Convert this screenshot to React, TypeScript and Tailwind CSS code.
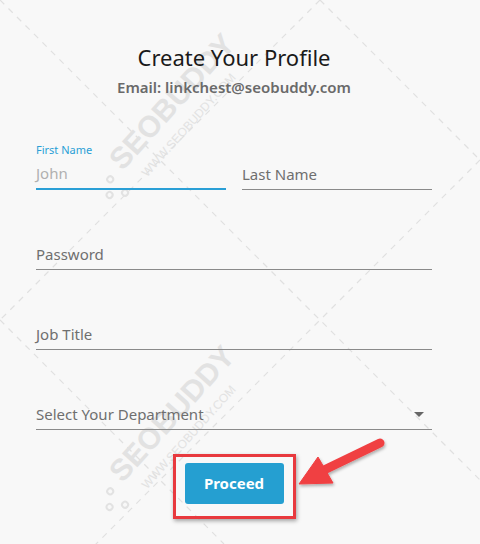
import React from "react";

// --- Constants ---

const FONT = { fontFamily: '"Noto Sans", "Open Sans", sans-serif' };

const WATERMARKS = [
    { x: 160, y: 130 },
    { x: 160, y: 442 },
];

// --- Pieces ---

function Watermark()
{
    return (
        <svg className="pointer-events-none absolute inset-0" width="480" height="544" viewBox="0 0 480 544">
            <g stroke="#e0e0e0" strokeWidth="1.2" strokeDasharray="6 6" fill="none">
                <line x1="0" y1="0" x2="480" y2="480" />
                <line x1="320" y1="0" x2="0" y2="320" />
                <line x1="320" y1="0" x2="480" y2="160" />
                <line x1="480" y1="160" x2="0" y2="640" />
                <line x1="0" y1="320" x2="224" y2="544" />
            </g>
            {WATERMARKS.map((tMark, index) => (
                <g key={index} transform={`translate(${tMark.x} ${tMark.y}) rotate(-48)`} fill="#e2e2e2">
                    <text x="-56" y="0" fontSize="30" fontWeight="700" fontFamily="Liberation Sans, sans-serif">SEOBUDDY</text>
                    <text x="-44" y="22" fontSize="12" fontFamily="Liberation Sans, sans-serif">WWW.SEOBUDDY.COM</text>
                    <g stroke="#e2e2e2" strokeWidth="2" fill="none">
                        <circle cx="-70" cy="-4" r="3" />
                        <circle cx="-70" cy="16" r="3" />
                        <circle cx="-82" cy="6" r="3" />
                    </g>
                </g>
            ))}
        </svg>
    );
}

function Arrow()
{
    return (
        <svg className="pointer-events-none absolute inset-0" width="480" height="544" viewBox="0 0 480 544">
            <defs>
                <filter id="arrowShadow" x="-20%" y="-20%" width="140%" height="140%">
                    <feDropShadow dx="1" dy="2" stdDeviation="1.5" floodColor="#000" floodOpacity="0.3" />
                </filter>
            </defs>
            <g filter="url(#arrowShadow)" fill="#f03f42" stroke="#f03f42">
                <line x1="380" y1="443" x2="322" y2="471" strokeWidth="9" strokeLinecap="round" />
                <polygon points="299,484 318,457 333,483" strokeWidth="1" strokeLinejoin="round" />
            </g>
        </svg>
    );
}

function Field({ label, placeholder, focused, select }: { label?: string; placeholder: string; focused?: boolean; select?: boolean })
{
    return (
        <div className="flex flex-1 flex-col">
            {label && (
                <span className="mb-[3px] h-[16px] text-[11px] leading-[16px] text-[#2a9fd6]">{label}</span>
            )}
            <div
                className={
                    focused
                        ? "flex h-[29px] items-center border-b-2 border-[#2a9fd6] pb-[2px]"
                        : "flex h-[29px] items-center border-b border-[#8a8a8a] pb-[2px]"
                }
            >
                <span className={focused ? "text-[15px] text-[#b0b0b0]" : "text-[15px] text-[#6f6f6f]"}>
                    {placeholder}
                </span>
                {select && (
                    <span className="ml-auto mr-[8px] h-0 w-0 border-x-[5px] border-t-[5px] border-x-transparent border-t-[#666]" />
                )}
            </div>
        </div>
    );
}

// --- Component ---

export default function App()
{
    return (
        <div className="relative h-[544px] w-full overflow-hidden bg-[#f8f8f8]" style={FONT}>
            <Watermark />

            <div className="relative flex flex-col pl-[36px] pr-[48px] pt-[42px]">
                {/* 제목 */}
                <h1 className="text-center text-[22px] leading-[30px] text-[#1a1a1a]">Create Your Profile</h1>
                <p className="mt-[6px] text-center text-[15px] font-semibold leading-[18px] text-[#6a6a6a]">
                    Email: linkchest@seobuddy.com
                </p>

                {/* 입력 필드 */}
                <div className="mt-[46px] flex flex-col gap-[51px]">
                    <div className="flex items-end gap-[16px]">
                        <Field label="First Name" placeholder="John" focused />
                        <Field placeholder="Last Name" />
                    </div>
                    <Field placeholder="Password" />
                    <Field placeholder="Job Title" />
                    <Field placeholder="Select Your Department" select />
                </div>

                {/* 버튼 */}
                <div className="mt-[24px] flex justify-center">
                    <div className="border-[3px] border-[#e8393e] px-[9px] pb-[12px] pt-[6px] shadow-[1px_2px_4px_rgba(0,0,0,0.35)]">
                        <button className="h-[41px] w-[99px] rounded-[3px] bg-[#259fd1] text-[15px] font-bold text-white">
                            Proceed
                        </button>
                    </div>
                </div>
            </div>

            <Arrow />
        </div>
    );
}
